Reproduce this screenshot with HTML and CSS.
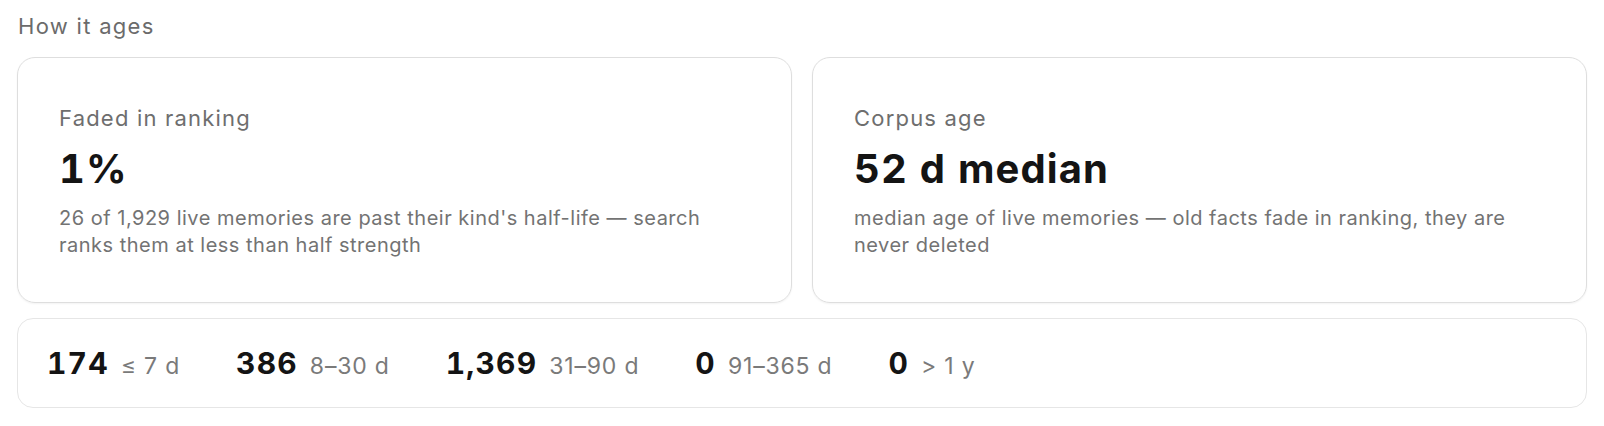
FILE: index.html
```html
<!DOCTYPE html>
<html lang="en">
<head>
<meta charset="utf-8">
<title>How it ages</title>
<link rel="stylesheet" href="styles.css">
</head>
<body>
<section class="aging">
  <h2 class="section-title">How it ages</h2>
  <div class="cards">
    <div class="card">
      <div class="card-label">Faded in ranking</div>
      <div class="card-value">1%</div>
      <p class="card-note">26 of 1,929 live memories are past their kind's half-life — search ranks them at less than half strength</p>
    </div>
    <div class="card">
      <div class="card-label">Corpus age</div>
      <div class="card-value">52 d median</div>
      <p class="card-note">median age of live memories — old facts fade in ranking, they are never deleted</p>
    </div>
  </div>
  <div class="buckets">
    <div class="bucket"><span class="bucket-count">174</span><span class="bucket-range">≤ 7 d</span></div>
    <div class="bucket"><span class="bucket-count">386</span><span class="bucket-range">8–30 d</span></div>
    <div class="bucket"><span class="bucket-count">1,369</span><span class="bucket-range">31–90 d</span></div>
    <div class="bucket"><span class="bucket-count">0</span><span class="bucket-range">91–365 d</span></div>
    <div class="bucket"><span class="bucket-count">0</span><span class="bucket-range">&gt; 1 y</span></div>
  </div>
</section>
</body>
</html>
```

FILE: styles.css
```css
html, body {
  margin: 0;
  padding: 0;
  background: #ffffff;
}

body {
  font-family: Inter, "Noto Sans", sans-serif;
  color: #161616;
}

.aging {
  padding: 12px 17px 0 17px;
}

.section-title {
  margin: 0 0 17px 1px;
  font-size: 22px;
  line-height: 28px;
  font-weight: 400;
  letter-spacing: 1.3px;
  color: #6b6b6b;
}

.cards {
  display: grid;
  grid-template-columns: 1fr 1fr;
  gap: 20px;
}

.card {
  border: 1px solid #dedede;
  border-radius: 18px;
  box-shadow: 0 1px 2px rgba(0, 0, 0, 0.05);
  padding: 46px 41px 43px 41px;
}

.card-label {
  font-size: 22px;
  line-height: 28px;
  letter-spacing: 1.2px;
  color: #6e6e6e;
}

.card-value {
  margin-top: 13px;
  font-size: 40px;
  line-height: 48px;
  font-weight: 700;
  letter-spacing: 1.1px;
  font-variant-numeric: tabular-nums;
  color: #141414;
}

.card-note {
  margin: 12px 0 0 0;
  font-size: 20px;
  line-height: 27px;
  letter-spacing: 0.5px;
  color: #737373;
}

.buckets {
  margin-top: 15px;
  height: 88px;
  border: 1px solid #e6e6e6;
  border-radius: 16px;
  padding: 0 29px;
  display: flex;
  align-items: center;
  gap: 56px;
}

.bucket {
  display: flex;
  align-items: baseline;
  gap: 12px;
}

.bucket-count {
  font-size: 30px;
  font-weight: 700;
  letter-spacing: 1.2px;
  font-variant-numeric: tabular-nums;
  color: #141414;
}

.bucket-range {
  font-size: 23px;
  letter-spacing: 0.8px;
  color: #7a7a7a;
}
```
